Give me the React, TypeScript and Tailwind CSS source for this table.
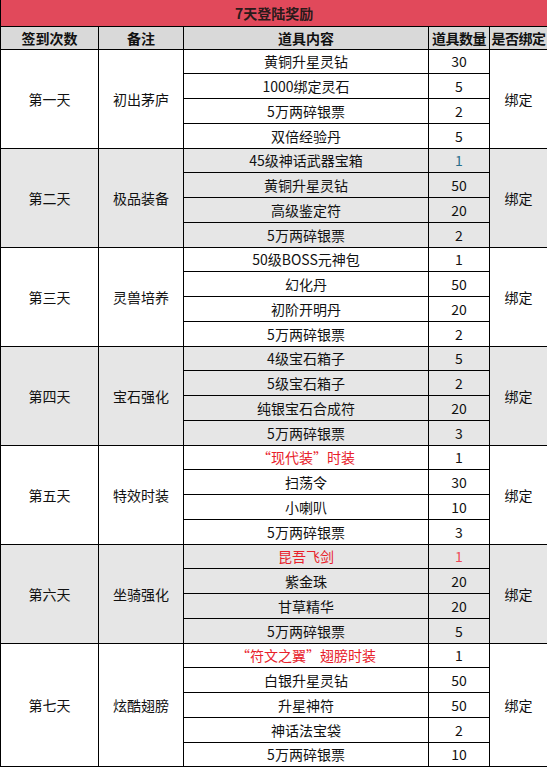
import React from 'react';

type Tone = 'red' | 'pink' | 'teal';
type Item = { name: string; qty: string; nameTone?: Tone; qtyTone?: Tone };
type Day = { day: string; note: string; items: Item[]; gray?: boolean };

const days: Day[] = [
  {
    day: '第一天',
    note: '初出茅庐',
    items: [
      { name: '黄铜升星灵钻', qty: '30' },
      { name: '1000绑定灵石', qty: '5' },
      { name: '5万两碎银票', qty: '2' },
      { name: '双倍经验丹', qty: '5' },
    ],
  },
  {
    day: '第二天',
    note: '极品装备',
    gray: true,
    items: [
      { name: '45级神话武器宝箱', qty: '1', qtyTone: 'teal' },
      { name: '黄铜升星灵钻', qty: '50' },
      { name: '高级鉴定符', qty: '20' },
      { name: '5万两碎银票', qty: '2' },
    ],
  },
  {
    day: '第三天',
    note: '灵兽培养',
    items: [
      { name: '50级BOSS元神包', qty: '1' },
      { name: '幻化丹', qty: '50' },
      { name: '初阶开明丹', qty: '20' },
      { name: '5万两碎银票', qty: '2' },
    ],
  },
  {
    day: '第四天',
    note: '宝石强化',
    gray: true,
    items: [
      { name: '4级宝石箱子', qty: '5' },
      { name: '5级宝石箱子', qty: '2' },
      { name: '纯银宝石合成符', qty: '20' },
      { name: '5万两碎银票', qty: '3' },
    ],
  },
  {
    day: '第五天',
    note: '特效时装',
    items: [
      { name: '“现代装”时装', qty: '1', nameTone: 'red' },
      { name: '扫荡令', qty: '30' },
      { name: '小喇叭', qty: '10' },
      { name: '5万两碎银票', qty: '3' },
    ],
  },
  {
    day: '第六天',
    note: '坐骑强化',
    gray: true,
    items: [
      { name: '昆吾飞剑', qty: '1', nameTone: 'red', qtyTone: 'pink' },
      { name: '紫金珠', qty: '20' },
      { name: '甘草精华', qty: '20' },
      { name: '5万两碎银票', qty: '5' },
    ],
  },
  {
    day: '第七天',
    note: '炫酷翅膀',
    items: [
      { name: '“符文之翼”翅膀时装', qty: '1', nameTone: 'red' },
      { name: '白银升星灵钻', qty: '50' },
      { name: '升星神符', qty: '50' },
      { name: '神话法宝袋', qty: '2' },
      { name: '5万两碎银票', qty: '10' },
    ],
  },
];

const cell = 'border border-black text-center align-middle p-0';

const toneClass = (tone?: Tone) =>
  tone === 'red'
    ? 'text-[#e8212b]'
    : tone === 'pink'
      ? 'text-[#ef4a5a]'
      : tone === 'teal'
        ? 'text-[#2a6f8c]'
        : 'text-[#111]';

const App = () => {
  return (
    <div
      className="w-[547px] bg-white text-[14px] leading-none text-[#111]"
      style={{ fontFamily: '"Noto Sans CJK SC", "Noto Sans", sans-serif' }}
    >
      <table className="w-[547px] table-fixed border-collapse">
        <colgroup>
          <col className="w-[98px]" />
          <col className="w-[85px]" />
          <col className="w-[245px]" />
          <col className="w-[61px]" />
          <col className="w-[58px]" />
        </colgroup>
        <thead>
          <tr className="h-[26px] bg-[#e1495b]">
            <th colSpan={5} className={`${cell} border-t-0 font-bold text-[#2a1a1a]`}>
              7天登陆奖励
            </th>
          </tr>
          <tr className="h-[23px] bg-[#d9d9d9]">
            <th className={`${cell} font-bold`}>签到次数</th>
            <th className={`${cell} font-bold`}>备注</th>
            <th className={`${cell} font-bold`}>道具内容</th>
            <th className={`${cell} whitespace-nowrap font-bold tracking-[-0.5px]`}>道具数量</th>
            <th className={`${cell} whitespace-nowrap font-bold tracking-[-0.5px]`}>是否绑定</th>
          </tr>
        </thead>
        <tbody>
          {days.map((d) =>
            d.items.map((it, i) => (
              <tr key={d.day + i} className={`h-[24.75px] ${d.gray ? 'bg-[#e6e6e6]' : 'bg-white'}`}>
                {i === 0 && (
                  <>
                    <td rowSpan={d.items.length} className={cell}>
                      {d.day}
                    </td>
                    <td rowSpan={d.items.length} className={cell}>
                      {d.note}
                    </td>
                  </>
                )}
                <td className={`${cell} ${toneClass(it.nameTone)}`}>{it.name}</td>
                <td className={`${cell} ${toneClass(it.qtyTone)}`}>{it.qty}</td>
                {i === 0 && (
                  <td rowSpan={d.items.length} className={cell}>
                    绑定
                  </td>
                )}
              </tr>
            ))
          )}
        </tbody>
      </table>
    </div>
  );
};

export default App;
